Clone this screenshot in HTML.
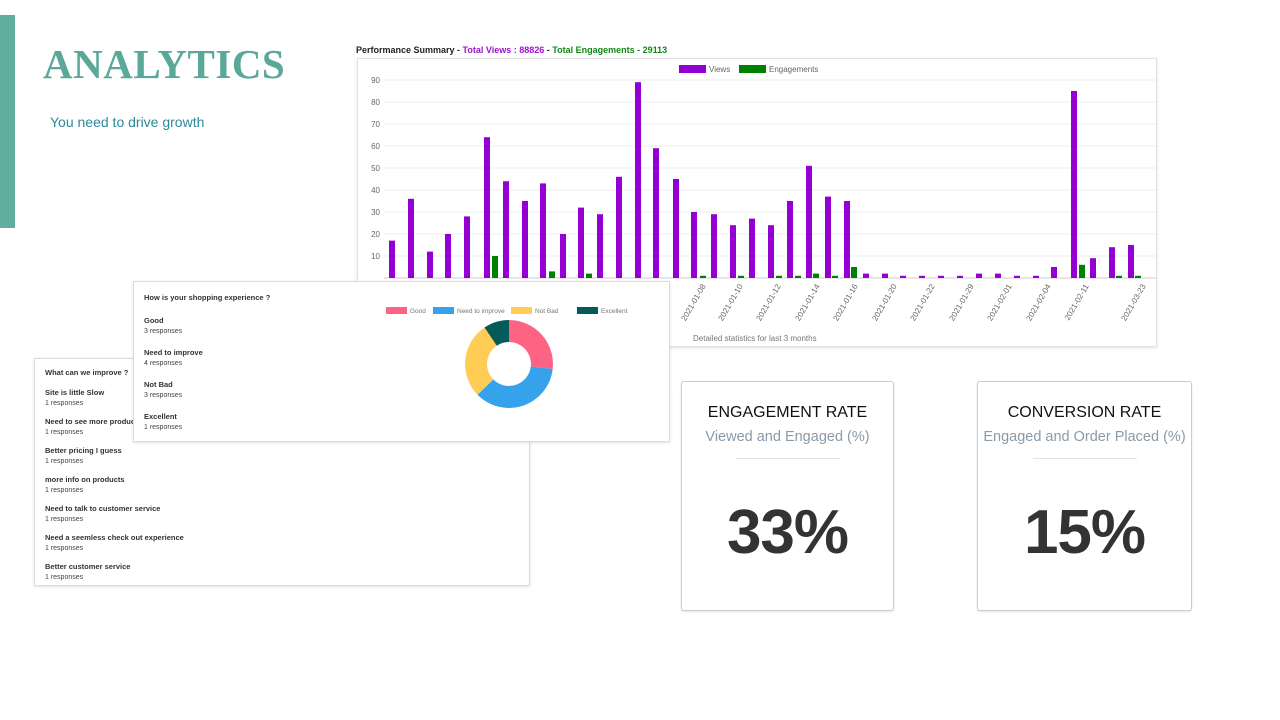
<!DOCTYPE html>
<html><head><meta charset="utf-8"><style>
body{margin:0;width:1280px;height:720px;background:#fff;position:relative;overflow:hidden;font-family:"Liberation Sans",sans-serif}
.abs{position:absolute}
.card{position:absolute;background:#fff;border:1px solid #ddd;box-shadow:0 1px 3px rgba(0,0,0,.12)}
.q{font-size:7.5px;font-weight:bold;color:#333}
.it b{display:block;font-size:7.5px;color:#333}
.it span{display:block;font-size:7px;color:#444;margin-top:3px}
.rate{position:absolute;border:1px solid #ccc;border-radius:3px;background:#fff;text-align:center;box-shadow:0 1px 2px rgba(0,0,0,.1)}
.rate h3{margin:22px 0 0;font-weight:normal;font-size:16px;color:#111}
.rate p{margin:7px 0 0;font-size:14.5px;color:#8a9aa8}
.rate hr{width:104px;border:0;border-top:1px solid #e3e3e3;margin:13px auto 0}
.rate .n{font-size:62px;font-weight:bold;color:#333;margin-top:38px;letter-spacing:-1px}
</style></head><body>
<div class="abs" style="left:0;top:15px;width:15px;height:213px;background:#5fae9f"></div>
<div class="abs" style="left:43px;top:40px;font-family:'Liberation Serif',serif;font-weight:bold;font-size:41px;color:#5aa89a;letter-spacing:0.5px">ANALYTICS</div>
<div class="abs" style="left:50px;top:114px;font-size:14px;color:#2a8a9a">You need to drive growth</div>

<div class="abs" style="left:356px;top:45px;font-size:9px;font-weight:bold;color:#222">Performance Summary - <span style="color:#9b14c9">Total Views : 88826</span> - <span style="color:#118811">Total Engagements - 29113</span></div>
<div class="card" style="left:357px;top:58px;width:798px;height:287px;border-color:#e2e2e2"></div>
<svg class="abs" style="left:0;top:0" width="1280" height="720">
<g stroke="#ececec" stroke-width="1">
<line x1="384" x2="1156" y1="80" y2="80"/><line x1="384" x2="1156" y1="102" y2="102"/><line x1="384" x2="1156" y1="124" y2="124"/><line x1="384" x2="1156" y1="146" y2="146"/><line x1="384" x2="1156" y1="168" y2="168"/><line x1="384" x2="1156" y1="190" y2="190"/><line x1="384" x2="1156" y1="212" y2="212"/><line x1="384" x2="1156" y1="234" y2="234"/><line x1="384" x2="1156" y1="256" y2="256"/>
</g>
<line x1="384" x2="1156" y1="278" y2="278" stroke="#ccc"/>
<g font-size="8" fill="#666" text-anchor="end">
<text x="380" y="83">90</text><text x="380" y="105">80</text><text x="380" y="127">70</text><text x="380" y="149">60</text><text x="380" y="171">50</text><text x="380" y="193">40</text><text x="380" y="215">30</text><text x="380" y="237">20</text><text x="380" y="259">10</text>
</g>
<rect x="679" y="65" width="27" height="8" fill="#9400d3"/><text x="709" y="72" font-size="8" fill="#666">Views</text>
<rect x="739" y="65" width="27" height="8" fill="#008000"/><text x="769" y="72" font-size="8" fill="#666">Engagements</text>
<g fill="#9400d3">
<rect x="389" y="240.6" width="6" height="37.4"/><rect x="408" y="198.8" width="6" height="79.2"/><rect x="427" y="251.6" width="6" height="26.4"/><rect x="445" y="234" width="6" height="44"/><rect x="464" y="216.4" width="6" height="61.6"/><rect x="484" y="137.2" width="6" height="140.8"/><rect x="503" y="181.2" width="6" height="96.8"/><rect x="522" y="201" width="6" height="77"/><rect x="540" y="183.4" width="6" height="94.6"/><rect x="560" y="234" width="6" height="44"/><rect x="578" y="207.6" width="6" height="70.4"/><rect x="597" y="214.2" width="6" height="63.8"/><rect x="616" y="176.8" width="6" height="101.2"/><rect x="635" y="82.2" width="6" height="195.8"/><rect x="653" y="148.2" width="6" height="129.8"/><rect x="673" y="179" width="6" height="99"/><rect x="691" y="212" width="6" height="66"/><rect x="711" y="214.2" width="6" height="63.8"/><rect x="730" y="225.2" width="6" height="52.8"/><rect x="749" y="218.6" width="6" height="59.4"/><rect x="768" y="225.2" width="6" height="52.8"/><rect x="787" y="201" width="6" height="77"/><rect x="806" y="165.8" width="6" height="112.2"/><rect x="825" y="196.6" width="6" height="81.4"/><rect x="844" y="201" width="6" height="77"/><rect x="863" y="273.6" width="6" height="4.4"/><rect x="882" y="273.6" width="6" height="4.4"/><rect x="900" y="275.8" width="6" height="2.2"/><rect x="919" y="275.8" width="6" height="2.2"/><rect x="938" y="275.8" width="6" height="2.2"/><rect x="957" y="275.8" width="6" height="2.2"/><rect x="976" y="273.6" width="6" height="4.4"/><rect x="995" y="273.6" width="6" height="4.4"/><rect x="1014" y="275.8" width="6" height="2.2"/><rect x="1033" y="275.8" width="6" height="2.2"/><rect x="1051" y="267" width="6" height="11"/><rect x="1071" y="91" width="6" height="187"/><rect x="1090" y="258.2" width="6" height="19.8"/><rect x="1109" y="247.2" width="6" height="30.8"/><rect x="1128" y="245" width="6" height="33"/>
</g>
<g fill="#008000">
<rect x="492" y="256" width="6" height="22"/><rect x="549" y="271.4" width="6" height="6.6"/><rect x="586" y="273.6" width="6" height="4.4"/><rect x="700" y="275.8" width="6" height="2.2"/><rect x="738" y="275.8" width="6" height="2.2"/><rect x="776" y="275.8" width="6" height="2.2"/><rect x="795" y="275.8" width="6" height="2.2"/><rect x="813" y="273.6" width="6" height="4.4"/><rect x="832" y="275.8" width="6" height="2.2"/><rect x="851" y="267" width="6" height="11"/><rect x="1079" y="264.8" width="6" height="13.2"/><rect x="1116" y="275.8" width="6" height="2.2"/><rect x="1135" y="275.8" width="6" height="2.2"/>
</g>
<g font-size="8" fill="#666" text-anchor="end">
<text transform="translate(706,286) rotate(-60)">2021-01-08</text>
<text transform="translate(743,286) rotate(-60)">2021-01-10</text>
<text transform="translate(781,286) rotate(-60)">2021-01-12</text>
<text transform="translate(820,286) rotate(-60)">2021-01-14</text>
<text transform="translate(858,286) rotate(-60)">2021-01-16</text>
<text transform="translate(897,286) rotate(-60)">2021-01-20</text>
<text transform="translate(935,286) rotate(-60)">2021-01-22</text>
<text transform="translate(974,286) rotate(-60)">2021-01-29</text>
<text transform="translate(1012,286) rotate(-60)">2021-02-01</text>
<text transform="translate(1051,286) rotate(-60)">2021-02-04</text>
<text transform="translate(1089,286) rotate(-60)">2021-02-11</text>
<text transform="translate(1146,286) rotate(-60)">2021-03-23</text>
</g>
<text x="693" y="341" font-size="8" fill="#777">Detailed statistics for last 3 months</text>
</svg>

<div class="card" style="left:34px;top:358px;width:494px;height:226px">
<div style="position:absolute;left:10px;top:9px;width:300px">
<div class="q">What can we improve ?</div>
<div class="it" style="margin-top:11px"><b>Site is little Slow</b><span>1 responses</span></div>
<div class="it" style="margin-top:10px"><b>Need to see more products.</b><span>1 responses</span></div>
<div class="it" style="margin-top:10px"><b>Better pricing I guess</b><span>1 responses</span></div>
<div class="it" style="margin-top:10px"><b>more info on products</b><span>1 responses</span></div>
<div class="it" style="margin-top:10px"><b>Need to talk to customer service</b><span>1 responses</span></div>
<div class="it" style="margin-top:10px"><b>Need a seemless check out experience</b><span>1 responses</span></div>
<div class="it" style="margin-top:10px"><b>Better customer service</b><span>1 responses</span></div>
</div></div>

<div class="card" style="left:133px;top:281px;width:535px;height:159px">
<div style="position:absolute;left:10px;top:11px">
<div class="q">How is your shopping experience ?</div>
<div class="it" style="margin-top:14px"><b>Good</b><span>3 responses</span></div>
<div class="it" style="margin-top:13px"><b>Need to improve</b><span>4 responses</span></div>
<div class="it" style="margin-top:13px"><b>Not Bad</b><span>3 responses</span></div>
<div class="it" style="margin-top:13px"><b>Excellent</b><span>1 responses</span></div>
</div>
<svg style="position:absolute;left:0;top:0" width="535" height="159">
<g font-size="6.5" fill="#777">
<rect x="252" y="25" width="21" height="7" fill="#ff6384"/><text x="276" y="31">Good</text>
<rect x="299" y="25" width="21" height="7" fill="#36a2eb"/><text x="323" y="31">Need to improve</text>
<rect x="377" y="25" width="21" height="7" fill="#ffcd56"/><text x="401" y="31">Not Bad</text>
<rect x="443" y="25" width="21" height="7" fill="#055a5a"/><text x="467" y="31">Excellent</text>
</g>
<g transform="translate(375,82)">
<path d="M0,-44 A44,44 0 0 1 43.7,5 L21.8,2.5 A22,22 0 0 0 0,-22 Z" fill="#ff6384"/>
<path d="M43.7,5 A44,44 0 0 1 -31.5,30.7 L-15.7,15.4 A22,22 0 0 0 21.8,2.5 Z" fill="#36a2eb"/>
<path d="M-31.5,30.7 A44,44 0 0 1 -24.5,-36.5 L-12.2,-18.3 A22,22 0 0 0 -15.7,15.4 Z" fill="#ffcd56"/>
<path d="M-24.5,-36.5 A44,44 0 0 1 0,-44 L0,-22 A22,22 0 0 0 -12.2,-18.3 Z" fill="#055a5a"/>
</g>
</svg>
</div>

<div class="rate" style="left:681px;top:381px;width:211px;height:228px">
<h3>ENGAGEMENT RATE</h3><p>Viewed and Engaged (%)</p><hr><div class="n">33%</div></div>
<div class="rate" style="left:977px;top:381px;width:213px;height:228px">
<h3>CONVERSION RATE</h3><p>Engaged and Order Placed (%)</p><hr><div class="n">15%</div></div>
</body></html>
